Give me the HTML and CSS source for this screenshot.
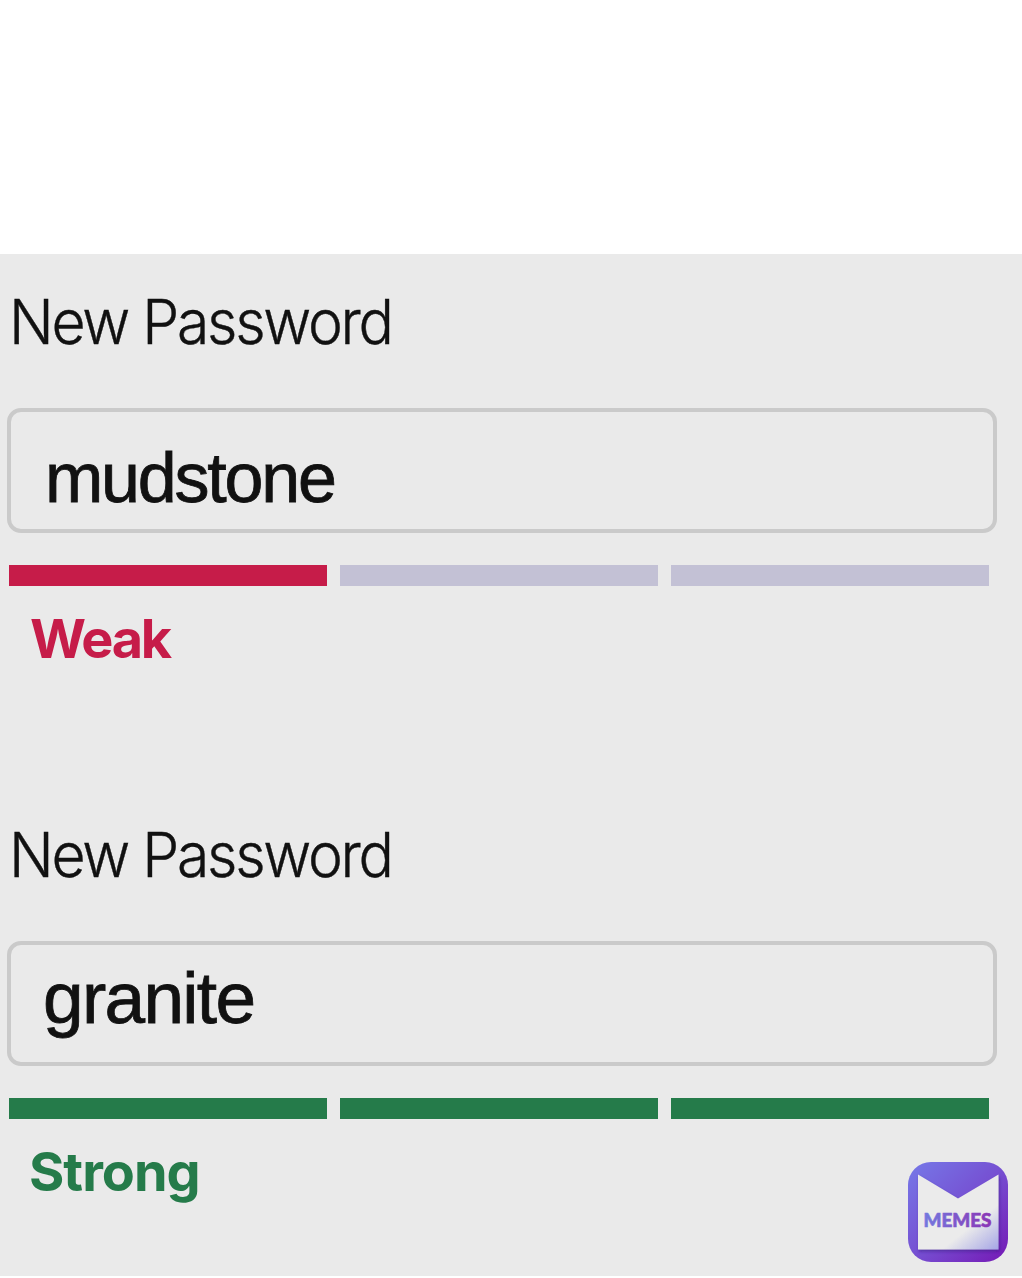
FILE: index.html
```html
<!DOCTYPE html>
<html lang="en">
<head>
  <meta charset="UTF-8" />
  <meta name="viewport" content="width=device-width, initial-scale=1.0"/>
  <title>New Password</title>
  <link rel="stylesheet" href="styles.css">
</head>
<body>
<div class="container">
  <div class="form-group">
    <label for="password-weak">New Password</label>
    <input type="text" id="password-weak" class="input-weak" value="mudstone" spellcheck="false" />
    <div class="meter">
      <span class="bar bar-weak"></span>
      <span class="bar"></span>
      <span class="bar"></span>
    </div>
    <p class="strength weak">Weak</p>
  </div>

  <div class="form-group">
    <label for="password-strong">New Password</label>
    <input type="text" id="password-strong" class="input-strong" value="granite" spellcheck="false" />
    <div class="meter">
      <span class="bar bar-strong"></span>
      <span class="bar bar-strong"></span>
      <span class="bar bar-strong"></span>
    </div>
    <p class="strength strong">Strong</p>
  </div>

  <svg class="badge" width="100" height="100" viewBox="0 0 100 100">
    <defs>
      <linearGradient id="bg" x1="0" y1="0" x2="1" y2="1">
        <stop offset="0" stop-color="#7679e8"/>
        <stop offset="0.5" stop-color="#7650d2"/>
        <stop offset="1" stop-color="#7518b5"/>
      </linearGradient>
      <linearGradient id="paper" x1="0.15" y1="0" x2="1" y2="1">
        <stop offset="0.65" stop-color="#ebebeb"/>
        <stop offset="1" stop-color="#a5a5e6"/>
      </linearGradient>
      <linearGradient id="word" x1="0" y1="0" x2="1" y2="0">
        <stop offset="0" stop-color="#7379df"/>
        <stop offset="1" stop-color="#8b35b5"/>
      </linearGradient>
      <filter id="shadow" x="-10%" y="-10%" width="120%" height="120%">
        <feDropShadow dx="1" dy="2" stdDeviation="1.5" flood-color="#32107a" flood-opacity="0.5"/>
      </filter>
    </defs>
    <rect width="100" height="100" rx="23" fill="url(#bg)"/>
    <path d="M10 12.500L50 36.500L90.500 12.500V87.500H10Z" fill="url(#paper)" filter="url(#shadow)"/>
    <text class="badge-text" x="15.500" y="64.500" textLength="68" lengthAdjust="spacingAndGlyphs" fill="url(#word)" stroke="url(#word)" stroke-width="0.6">MEMES</text>
  </svg>
</div>
</body>
</html>
```

FILE: styles.css
```css
body {
  font-family: Inter, sans-serif;
  margin: 0;
  padding-top: 254px;
  background-color: #fff;
  color: #111;
}
.container {
  position: relative;
  height: 1022px;
  background-color: #eaeaea;
}
.form-group {
  box-sizing: border-box;
  height: 533px;
  padding: 38px 25px 0 7px;
}
.form-group + .form-group {
  height: 489px;
}
label {
  display: block;
  margin: 0 0 56px 2px;
  font-size: 62px;
  font-weight: 300;
  line-height: 60px;
  letter-spacing: -2.4px;
  transform: scaleX(0.95);
  transform-origin: left;
  -webkit-text-stroke: 0.4px #111;
}
input {
  display: block;
  width: 100%;
  height: 125px;
  padding: 0 34px;
  border: 4px solid #cacaca;
  border-radius: 14px;
  box-sizing: border-box;
  background: transparent;
  color: #111;
  font-family: "Liberation Sans", Arial, sans-serif;
  -webkit-text-stroke: 0.8px #111;
}
.input-weak {
  padding-top: 14px;
  font-size: 70px;
  letter-spacing: -2.2px;
}
.input-strong {
  padding-left: 32px;
  padding-bottom: 12px;
  font-size: 73px;
  letter-spacing: -1.7px;
}
.meter {
  display: flex;
  gap: 13px;
  margin: 32px 8px 0 2px;
}
.bar {
  flex: 1;
  height: 21px;
  background-color: #c3c1d5;
}
.bar-weak {
  background-color: #c61c49;
}
.bar-strong {
  background-color: #257b4a;
}
.strength {
  margin: 23px 0 0 23px;
  font-size: 54px;
  font-weight: 700;
  line-height: 60px;
}
.weak {
  color: #c61c49;
  letter-spacing: -2.2px;
}
.strong {
  margin-left: 22px;
  color: #257b4a;
  letter-spacing: -1px;
}
.badge {
  position: absolute;
  right: 14px;
  bottom: 14px;
}
.badge-text {
  font-family: Lato, sans-serif;
  font-size: 18px;
  font-weight: 900;
}
```
